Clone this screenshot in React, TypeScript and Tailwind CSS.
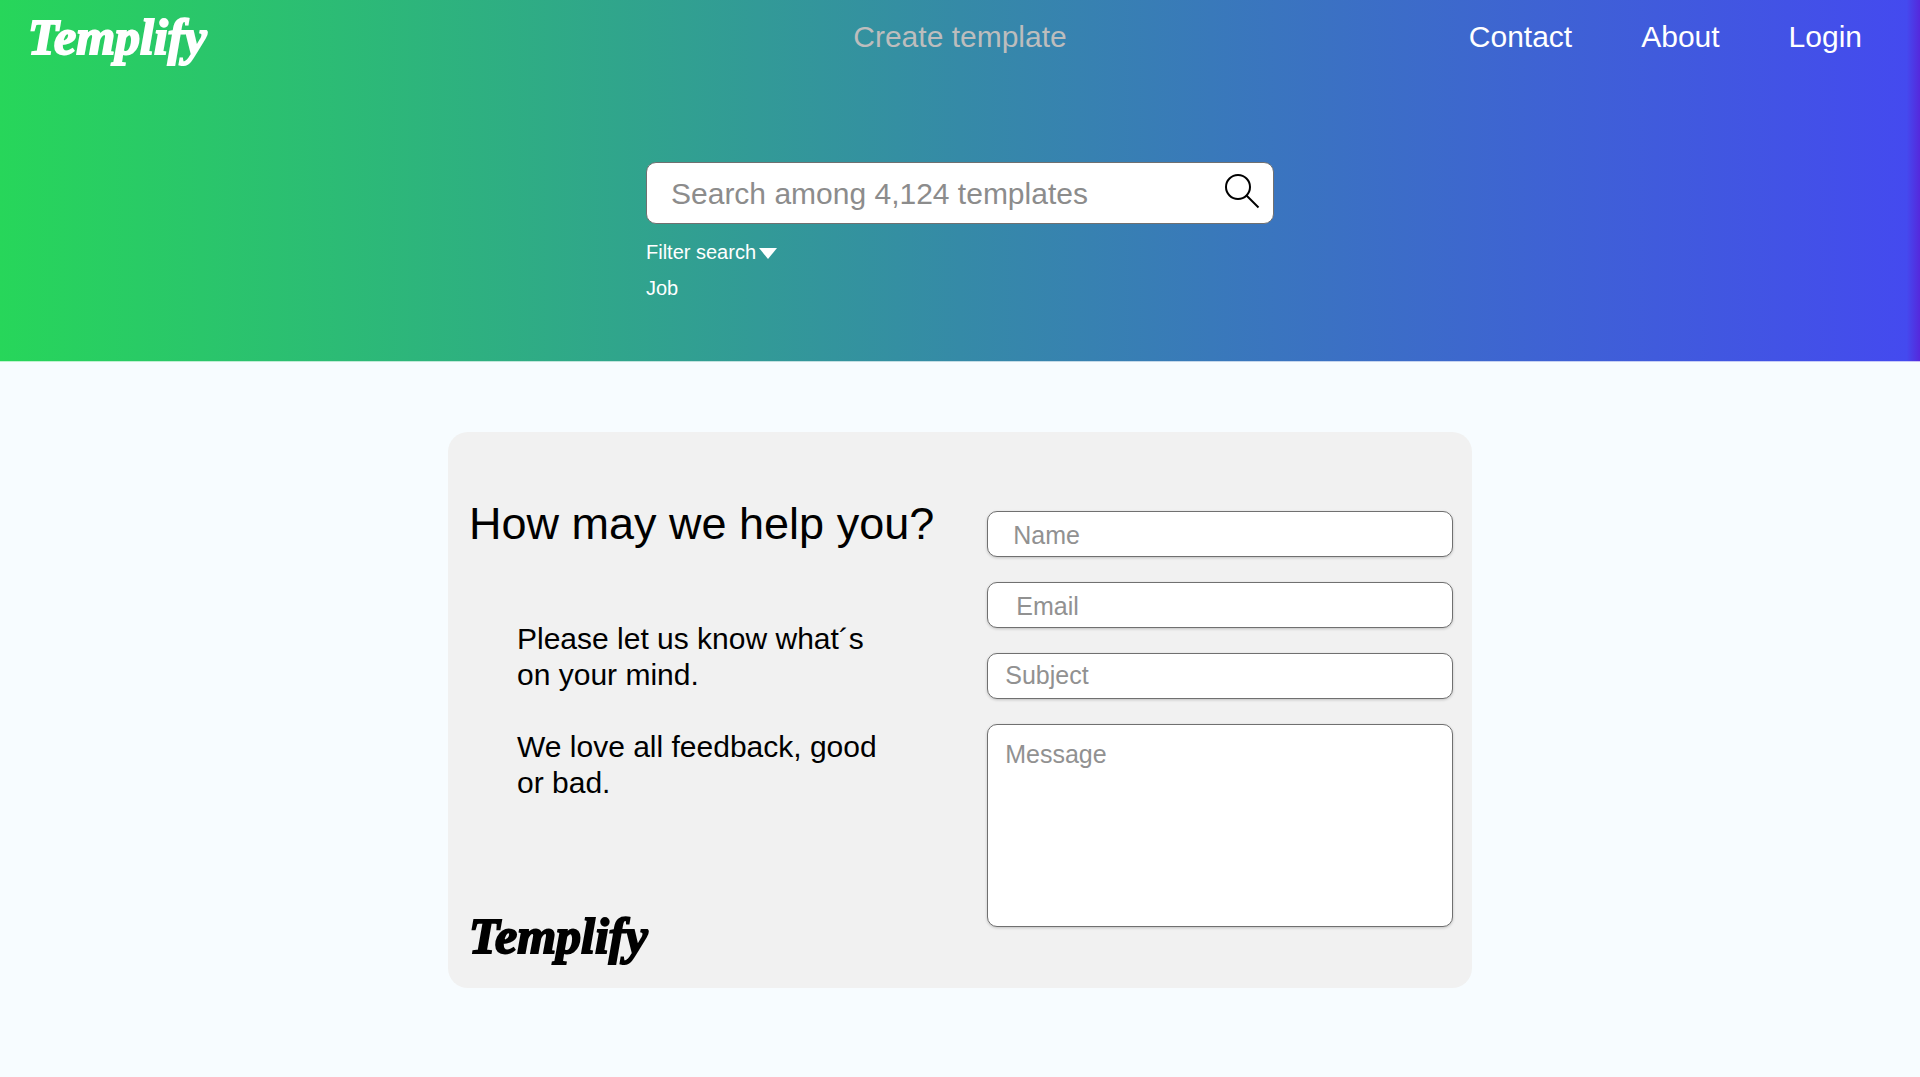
import React from "react";

function Logo({ className }: { className: string }) {
  return (
    <span
      className={`block font-['Liberation_Serif',serif] text-[50px] leading-[50px] font-bold italic [-webkit-text-stroke:2px_currentColor] ${className}`}
    >
      Templify
    </span>
  );
}

const field =
  "block w-full rounded-[10px] border border-[#707070] bg-white text-[25px] leading-[30px] text-black placeholder:text-[#919191] placeholder:opacity-100 shadow-[0_1px_3px_rgba(0,0,0,0.2)] outline-none";

export default function App() {
  return (
    <div className="min-h-screen bg-[#f7fcff] font-['Liberation_Sans',Arial,sans-serif] text-black">
      <header className="border-b border-white/70 bg-[linear-gradient(90deg,#27d65a_0%,#358aa7_50%,#444aef_99.3%,#5528dc_100%)] pb-[61px] text-white">
        <nav className="grid grid-cols-[1fr_auto_1fr] items-start px-7 pt-3 text-[30px] leading-9">
          <a href="#home" className="justify-self-start">
            <Logo className="text-white" />
          </a>
          <a href="#create" className="mt-[7px] text-[#bdbdbd]">
            Create template
          </a>
          <div className="mt-[7px] mr-[30px] flex gap-[69px] justify-self-end">
            <a href="#contact">Contact</a>
            <a href="#about">About</a>
            <a href="#login">Login</a>
          </div>
        </nav>

        <form className="mx-auto mt-[100px] w-full max-w-[628px]">
          <div className="flex h-[62px] items-center rounded-[10px] border border-[#707070] bg-white pr-[13px] pl-6">
            <input
              type="search"
              aria-label="Search templates"
              placeholder="Search among 4,124 templates"
              className="min-w-0 flex-1 bg-transparent pt-0.5 text-[30px] leading-9 text-black outline-none placeholder:text-[#8c8c8c] placeholder:opacity-100"
            />
            <button type="submit" aria-label="Search" className="mb-1">
              <svg width="36" height="36" viewBox="0 0 36 36" fill="none" stroke="#000" strokeWidth="2">
                <circle cx="14" cy="14" r="12" />
                <path d="M22.5 22.5 34.5 34.5" />
              </svg>
            </button>
          </div>
          <button type="button" className="mt-4 flex items-center gap-[3px] text-[20px] leading-6">
            Filter search
            <svg width="18" height="11" viewBox="0 0 18 11" fill="#fff" className="mt-0.5">
              <path d="M0 0H18L9 11Z" />
            </svg>
          </button>
          <button type="button" className="mt-3 block text-[20px] leading-6">
            Job
          </button>
        </form>
      </header>

      <main className="px-4 py-[70px]">
        <section className="mx-auto grid w-full max-w-[1024px] grid-cols-[1fr_466px] gap-x-[53px] rounded-[20px] bg-[#f1f1f1] pt-[65px] pr-[19px] pb-[14px] pl-[21px]">
          <div className="flex flex-col">
            <h1 className="text-[45px] leading-[54px] whitespace-nowrap">How may we help you?</h1>
            <div className="mt-[70px] ml-12 max-w-[376px] space-y-9 text-[30px] leading-9">
              <p>Please let us know what´s on your mind.</p>
              <p>We love all feedback, good or bad.</p>
            </div>
            <Logo className="mt-auto pb-[13px]" />
          </div>
          <form className="mt-[14px] mb-[47px] flex flex-col gap-[25px]">
            <input aria-label="Name" placeholder="Name" className={`${field} h-[46px] pt-0.5 pl-[25px]`} />
            <input type="email" aria-label="Email" placeholder="Email" className={`${field} h-[46px] pt-0.5 pl-7`} />
            <input aria-label="Subject" placeholder="Subject" className={`${field} h-[46px] pb-0.5 pl-[17px]`} />
            <textarea
              aria-label="Message"
              placeholder="Message"
              className={`${field} h-[203px] resize-none pt-[14px] pl-[17px]`}
            />
          </form>
        </section>
      </main>
    </div>
  );
}
